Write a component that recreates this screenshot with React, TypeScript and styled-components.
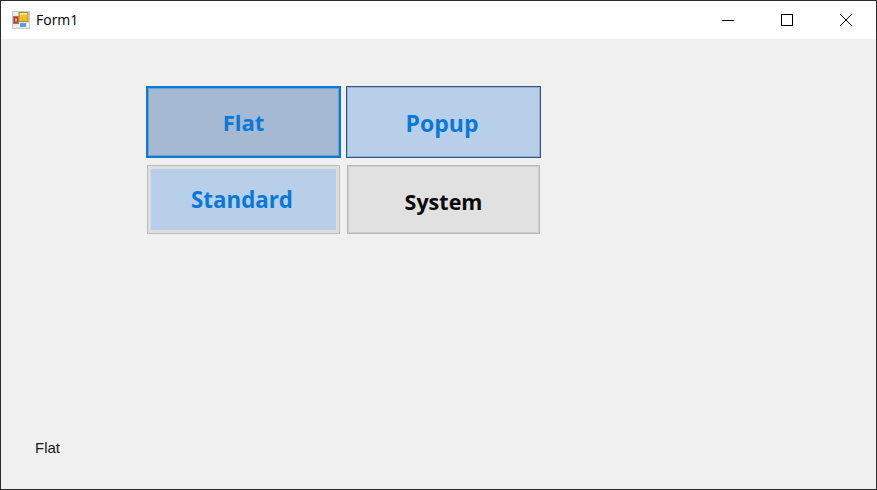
import React from "react";
import styled, { createGlobalStyle } from "styled-components";

const Global = createGlobalStyle`
  html, body { margin: 0; padding: 0; background: #f0f0f0; overflow: hidden; }
`;

const Window = styled.div`
  box-sizing: border-box;
  width: 877px;
  height: 490px;
  border: 1px solid #2b2b2b;
  display: flex;
  flex-direction: column;
  background: #f0f0f0;
  font-family: "Open Sans", "Noto Sans", sans-serif;
`;

const TitleBar = styled.div`
  height: 38px;
  flex: none;
  background: #fff;
  display: flex;
  align-items: center;
  padding-left: 11px;
`;

const Title = styled.span`
  margin-left: 6px;
  margin-top: -1px;
  font-size: 14px;
  color: #000;
  font-family: "Open Sans", sans-serif;
`;

const Controls = styled.div`
  margin-left: auto;
  margin-right: 1px;
  display: flex;
  height: 100%;
`;

const Control = styled.div`
  width: 59px;
  height: 100%;
  display: flex;
  align-items: center;
  justify-content: center;
  padding-bottom: 1px;
  box-sizing: border-box;
`;

const Body = styled.div`
  flex: 1;
  display: flex;
  flex-direction: column;
  justify-content: space-between;
  padding: 47px 0 0 145px;
`;

const Grid = styled.div`
  display: grid;
  grid-template-columns: 195px 195px;
  grid-template-rows: 72px 69px;
  column-gap: 5px;
  row-gap: 7px;
`;

const Btn = styled.button`
  box-sizing: border-box;
  font-family: "Open Sans", "Noto Sans", sans-serif;
  font-weight: 700;
  font-size: 22px;
  color: #0a78d7;
  padding: 0;
  display: flex;
  align-items: center;
  justify-content: center;
`;

const FlatBtn = styled(Btn)`
  background: #a5bad2;
  border: 2px solid #0a7ad9;
  box-shadow: inset 0 0 0 1px #6f9fd0;
  font-size: 22px;
`;

const PopupBtn = styled(Btn)`
  background: #b8cfea;
  border: 1px solid #2f5680;
  box-shadow: inset 0 0 0 1px #94b0d0;
  font-size: 23px;
  padding: 1px 3px 0 0;
`;

const StandardBtn = styled(Btn)`
  margin: 0 1px;
  background: #b8cfea;
  border: 1px solid #bcbcbc;
  box-shadow: inset 0 0 0 3px #dedede;
  font-size: 22.3px;
  padding: 0 3px 0 0;
`;

const SystemBtn = styled(Btn)`
  margin: 0 1px;
  background: #e1e1e1;
  border: 1px solid #b8b8b8;
  box-shadow: inset 0 0 0 1px #cfcfcf;
  color: #0a0a0a;
  font-size: 21.5px;
  padding: 4px 0 0 0;
`;

const Status = styled.div`
  margin: 0 0 31px -111px;
  font-size: 15px;
  line-height: 20px;
  color: #1a1a1a;
  font-family: "Liberation Sans", sans-serif;
`;

const AppIcon = () => (
  <svg width="18" height="18" viewBox="0 0 18 18">
    <rect x="0.5" y="0.5" width="17" height="17" fill="#ececec" stroke="#c8c8c8" />
    <rect x="1.5" y="5.5" width="5" height="7" fill="#c8372c" stroke="#9c7a76" />
    <rect x="3" y="7.5" width="2" height="3" fill="#e9a49c" />
    <rect x="7" y="1.5" width="9" height="9" fill="#f4bd28" stroke="#a98c3a" />
    <rect x="8" y="2" width="7" height="2" fill="#fbe08a" />
    <rect x="8" y="12" width="6" height="4" fill="#5a9ae2" />
    <rect x="15" y="12" width="2" height="4" fill="#ffffff" />
  </svg>
);

export default function App() {
  return (
    <Window>
      <Global />
      <TitleBar>
        <AppIcon />
        <Title>Form1</Title>
        <Controls>
          <Control>
            <svg width="12" height="12" viewBox="0 0 12 12"><path d="M0 6.5H12" stroke="#000" strokeWidth="1" /></svg>
          </Control>
          <Control>
            <svg width="12" height="12" viewBox="0 0 12 12"><rect x="0.5" y="0.5" width="11" height="11" fill="none" stroke="#000" /></svg>
          </Control>
          <Control>
            <svg width="12" height="12" viewBox="0 0 12 12"><path d="M0.3 0.3L11.7 11.7M11.7 0.3L0.3 11.7" stroke="#000" strokeWidth="1" fill="none" /></svg>
          </Control>
        </Controls>
      </TitleBar>
      <Body>
        <Grid>
          <FlatBtn>Flat</FlatBtn>
          <PopupBtn>Popup</PopupBtn>
          <StandardBtn>Standard</StandardBtn>
          <SystemBtn>System</SystemBtn>
        </Grid>
        <Status>Flat</Status>
      </Body>
    </Window>
  );
}
